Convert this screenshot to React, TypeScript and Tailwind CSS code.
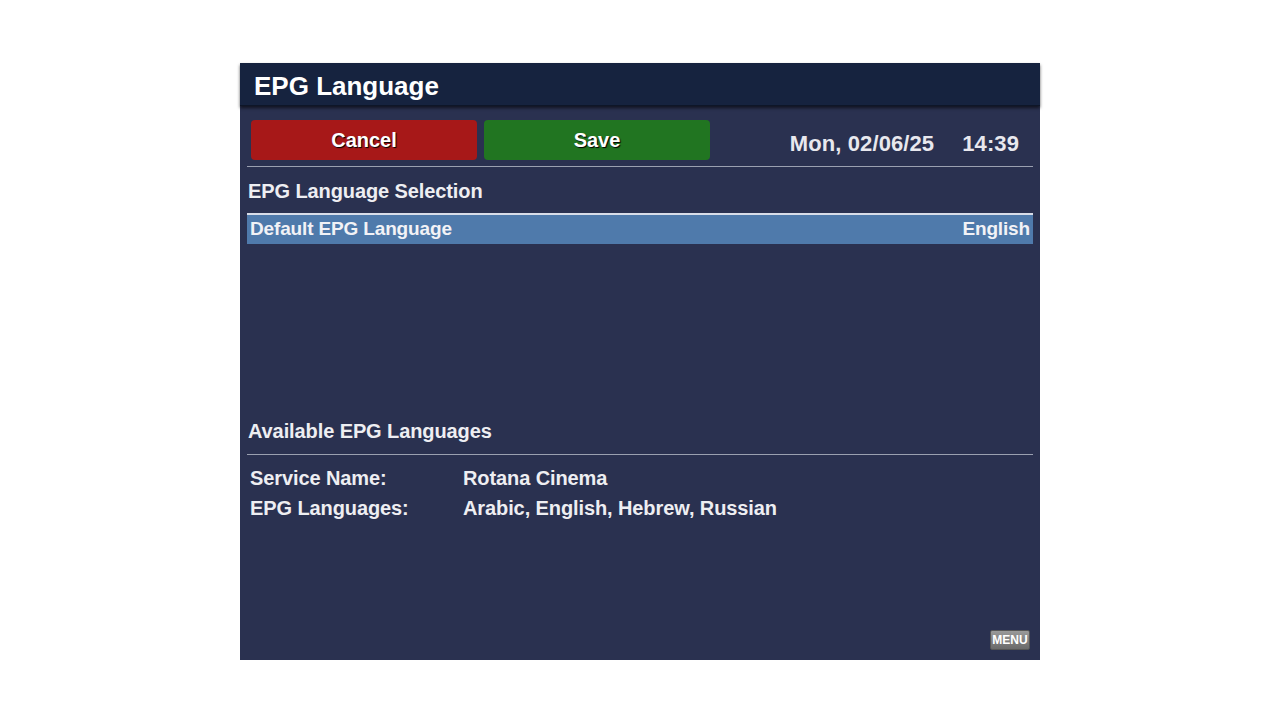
export default function App() {
  return (
    <div className="w-[1280px] h-[720px] bg-white flex justify-center pt-[63px] font-['Liberation_Sans',Arial,sans-serif]">
      <div className="w-[800px] h-[597px] bg-[#2a3150] flex flex-col">
        <div className="h-[43px] bg-[#16233f] flex items-center pl-[14px] pt-[3px] shadow-[0_2px_3px_rgba(0,0,0,0.6)] border-b border-[#0e1628]">
          <h1 className="text-[26px] font-bold text-white leading-none">EPG Language</h1>
        </div>

        <div className="flex items-center pl-[11px] pr-[21px] pt-[14px]">
          <button className="w-[226px] h-[40px] rounded-[4px] bg-[#a71818] text-white text-[20px] font-bold [text-shadow:1px_1px_1px_#000]">
            Cancel
          </button>
          <button className="ml-[7px] w-[226px] h-[40px] rounded-[4px] bg-[#217521] text-white text-[20px] font-bold [text-shadow:1px_1px_1px_#000]">
            Save
          </button>
          <div className="ml-auto flex items-center gap-[28px] text-[#e8e8ee] text-[22px] font-bold tracking-[0.1px] pt-[6px]">
            <span>Mon, 02/06/25</span>
            <span>14:39</span>
          </div>
        </div>

        <div className="mx-[7px] mt-[6px] h-px bg-[#9aa0b0]"></div>

        <div className="px-[8px] pt-[13px] text-[20px] font-bold tracking-[-0.1px] text-[#eeeef2] leading-[23px]">EPG Language Selection</div>

        <div className="mx-[7px] mt-[10px] h-[31px] bg-[#4f7aab] border-t-2 border-[#d8dde8] flex items-center justify-between px-[3px] text-[19px] font-bold tracking-[-0.15px] text-[#f2f2f6]">
          <span>Default EPG Language</span>
          <span>English</span>
        </div>

        <div className="px-[8px] mt-[176px] text-[20px] font-bold tracking-[-0.1px] text-[#eeeef2] leading-[23px]">Available EPG Languages</div>

        <div className="mx-[7px] mt-[11px] h-px bg-[#9aa0b0]"></div>

        <div className="px-[10px] mt-[12px] grid grid-cols-[213px_1fr] gap-y-[7px] text-[20px] font-bold tracking-[-0.1px] text-[#eeeef2] leading-[23px]">
          <span>Service Name:</span>
          <span>Rotana Cinema</span>
          <span>EPG Languages:</span>
          <span>Arabic, English, Hebrew, Russian</span>
        </div>

        <div className="mt-auto flex justify-end pr-[10px] pb-[10px]">
          <div className="w-[40px] h-[20px] rounded-[2px] bg-gradient-to-b from-[#9a9a9a] to-[#6a6a6a] border border-[#555] flex items-center justify-center text-[12px] font-bold text-white">
            MENU
          </div>
        </div>
      </div>
    </div>
  );
}
